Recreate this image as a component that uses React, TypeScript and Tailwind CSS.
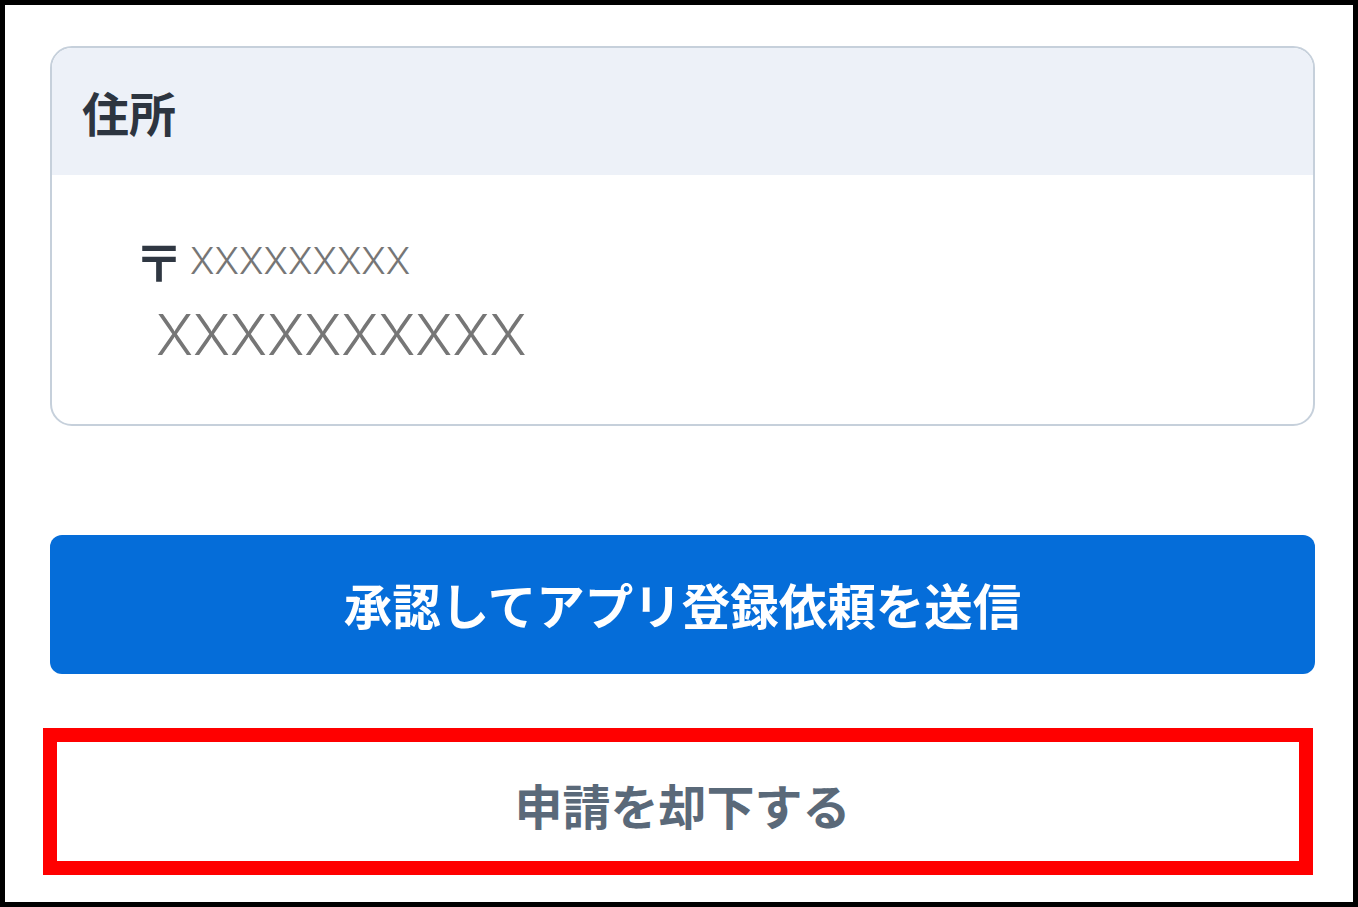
const JP = { fontFamily: '"Noto Sans CJK JP", "Noto Sans", sans-serif' };
const LATIN = { fontFamily: 'Inter, "Noto Sans", sans-serif' };

export default function App() {
  return (
    <div className="w-[1358px] h-[907px] bg-white">
      <div className="h-full border-[5px] border-black bg-white pl-[45px] pr-[38px] pt-[41px]">
        {/* Address card */}
        <div className="rounded-[22px] border-2 border-[#c6d0db] overflow-hidden bg-white">
          <div className="h-[127px] bg-[#edf1f8] flex items-center pl-[30px]">
            <h2 className="text-[47px] font-bold text-[#2d3540] leading-none" style={JP}>
              住所
            </h2>
          </div>
          <div className="h-[249px] pl-[82px] pt-[60px]">
            <div className="flex items-center gap-[6px]">
              <span className="text-[50px] font-bold text-[#2f3742] leading-none" style={JP}>
                〒
              </span>
              <span className="text-[37px] font-light text-[#767676] leading-none" style={LATIN}>
                XXXXXXXXX
              </span>
            </div>
            <div className="mt-[22px] pl-[22px] text-[56px] font-light text-[#767676] leading-none" style={LATIN}>
              XXXXXXXXXX
            </div>
          </div>
        </div>

        {/* Approve */}
        <button
          className="mt-[109px] w-full h-[139px] rounded-[12px] bg-[#056dd9] text-white text-[48.5px] font-bold"
          style={JP}
        >
          承認してアプリ登録依頼を送信
        </button>

        {/* Reject */}
        <div className="relative mt-[54px]">
          <button
            className="w-full h-[147px] bg-white text-[#5a6979] text-[48px] font-bold pt-[4px]"
            style={JP}
          >
            申請を却下する
          </button>
          <div className="absolute left-[-7px] top-0 w-[1270px] h-[147px] border-[14px] border-[#ff0000] pointer-events-none" />
        </div>
      </div>
    </div>
  );
}
